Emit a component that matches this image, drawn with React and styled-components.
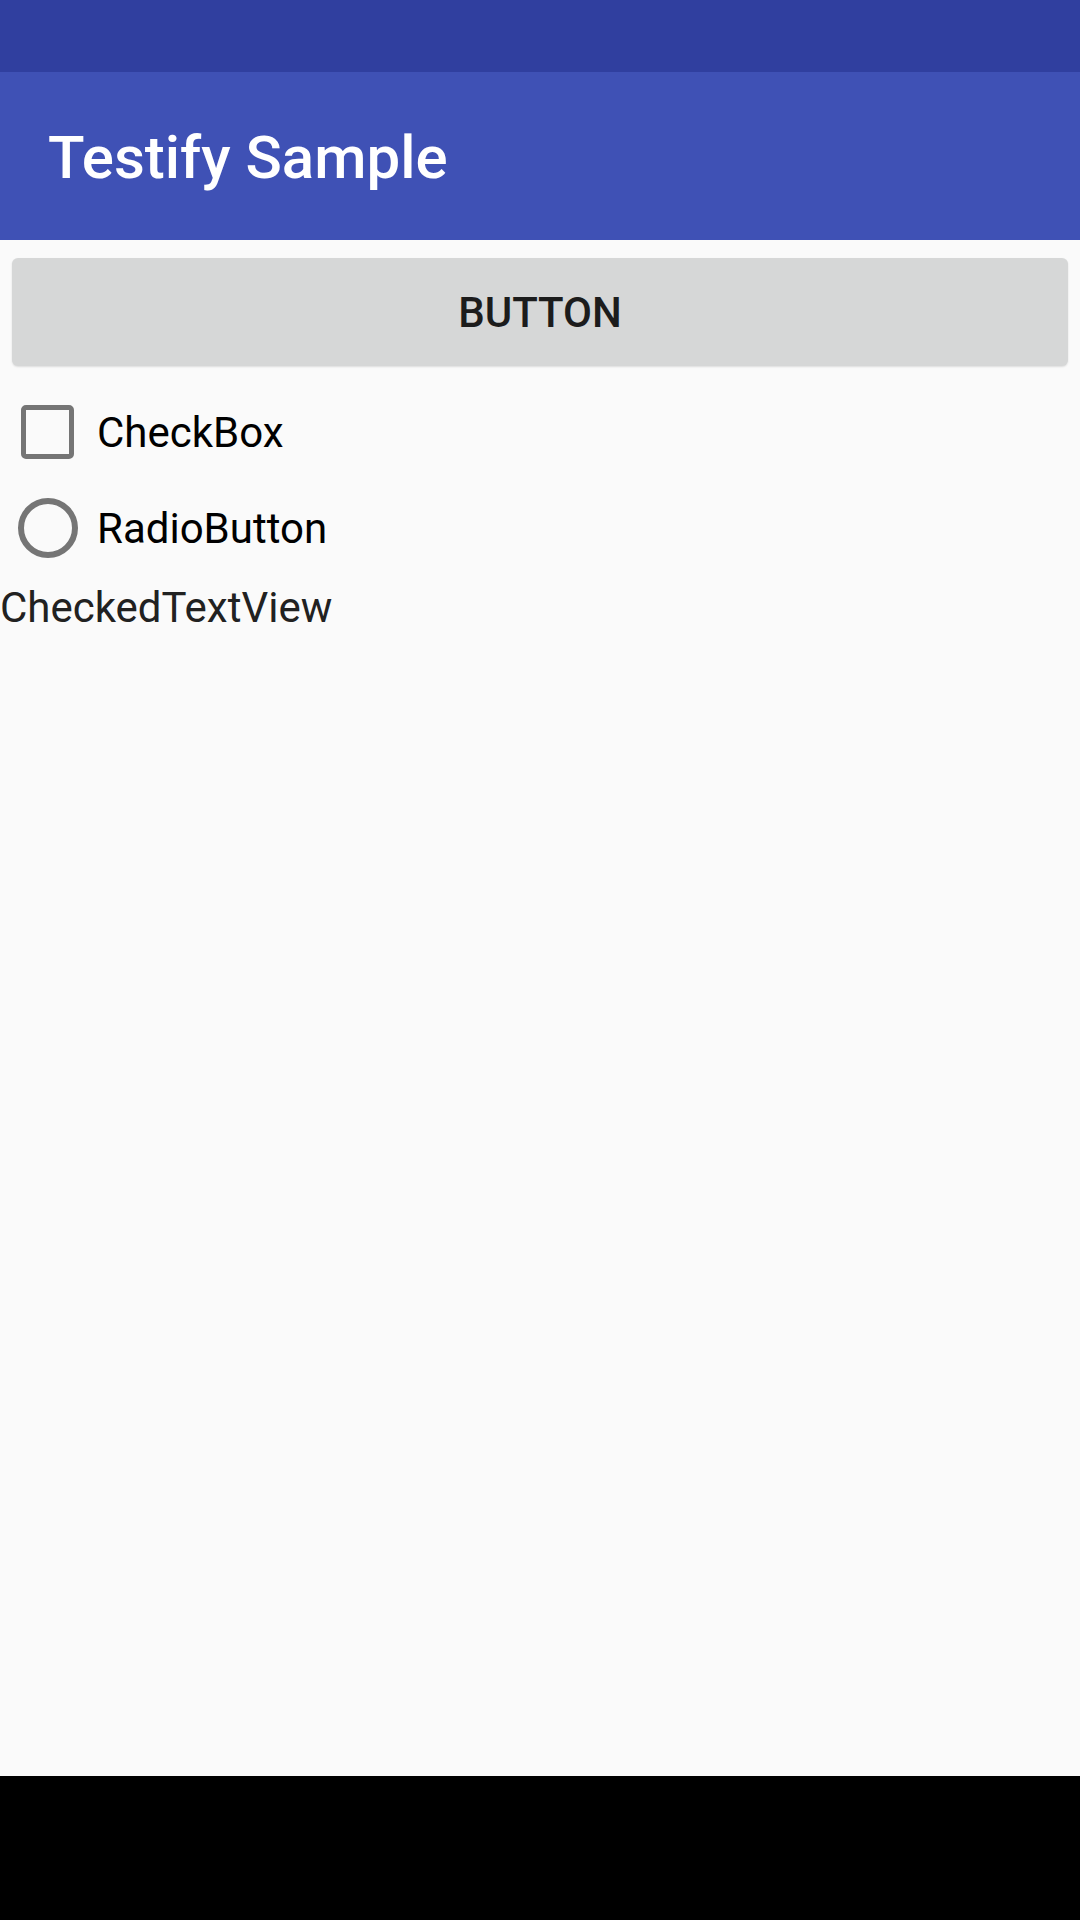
import React from "react";
import styled, { createGlobalStyle } from "styled-components";

const Global = createGlobalStyle`
  html, body { margin: 0; padding: 0; }
  body { font-family: Roboto, "Noto Sans", sans-serif; background: #000; }
`;

const Screen = styled.div`
  width: 1080px;
  height: 1920px;
  display: flex;
  flex-direction: column;
  background: #fafafa;
  overflow: hidden;
`;

const StatusBar = styled.div`
  height: 72px;
  flex: none;
  background: #303f9f;
`;

const AppBar = styled.header`
  height: 168px;
  flex: none;
  background: #3f51b5;
  display: flex;
  align-items: center;
  padding-left: 48px;
`;

const Title = styled.h1`
  margin: 0;
  font-family: Roboto, sans-serif;
  font-weight: 500;
  font-size: 60px;
  color: #ffffff;
  line-height: 1;
  transform: translateY(2px);
`;

const Content = styled.main`
  flex: 1;
  display: flex;
  flex-direction: column;
  padding-top: 18px;
`;

const Button = styled.button`
  margin: 0 12px;
  height: 108px;
  border: none;
  border-radius: 6px;
  background: #d6d7d7;
  color: #1c1c1c;
  font-family: Roboto, sans-serif;
  font-weight: 500;
  font-size: 42px;
  letter-spacing: 0;
  text-transform: uppercase;
  display: flex;
  align-items: center;
  justify-content: center;
  padding: 0;
  box-shadow: 0 1px 2px rgba(0, 0, 0, 0.12);
`;

const OptionRow = styled.label`
  height: 96px;
  display: flex;
  align-items: center;
  margin-top: ${(p) => p.$top || 0}px;
`;

const IconSlot = styled.span`
  width: 97px;
  flex: none;
  display: flex;
  align-items: center;
  padding-left: ${(p) => p.$pad}px;
  box-sizing: border-box;
`;

const Box = styled.span`
  width: 53px;
  height: 54px;
  box-sizing: border-box;
  border: 5px solid #757575;
  border-radius: 5px;
`;

const Ring = styled.span`
  width: 60px;
  height: 60px;
  box-sizing: border-box;
  border: 6px solid #757575;
  border-radius: 50%;
`;

const OptionText = styled.span`
  font-family: Roboto, sans-serif;
  font-size: 42px;
  color: #000000;
  line-height: 1;
  transform: translateY(1px);
`;

const CheckedText = styled.div`
  font-family: Roboto, sans-serif;
  font-size: 42px;
  color: #212121;
  line-height: 49px;
  margin-top: 7px;
`;

const NavBar = styled.div`
  height: 144px;
  flex: none;
  background: #000;
`;

export default function App() {
  return (
    <>
      <Global />
      <Screen>
        <StatusBar />
        <AppBar>
          <Title>Testify Sample</Title>
        </AppBar>
        <Content>
          <Button>Button</Button>
          <OptionRow $top={18}>
            <IconSlot $pad={21}>
              <Box />
            </IconSlot>
            <OptionText>CheckBox</OptionText>
          </OptionRow>
          <OptionRow>
            <IconSlot $pad={18}>
              <Ring />
            </IconSlot>
            <OptionText>RadioButton</OptionText>
          </OptionRow>
          <CheckedText>CheckedTextView</CheckedText>
        </Content>
        <NavBar />
      </Screen>
    </>
  );
}
